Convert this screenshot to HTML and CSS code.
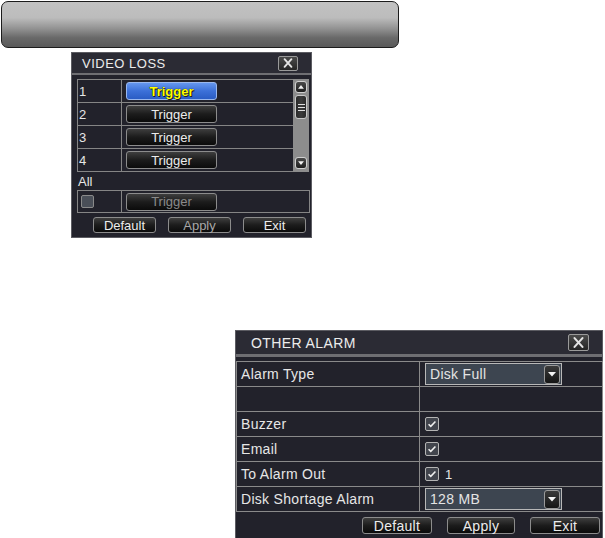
FILE: index.html
```html
<!DOCTYPE html>
<html>
<head>
<meta charset="utf-8">
<link rel="stylesheet" href="styles.css">
</head>
<body>
<div class="titlebar"></div>

<div class="panel vl">
  <div class="phead">
    <span class="ptitle">VIDEO LOSS</span>
    <span class="close"><svg viewBox="0 0 20 14" width="18" height="12"><path d="M6 2.5L14 11.5M14 2.5L6 11.5" stroke="#e4e4e4" stroke-width="2.2" stroke-linecap="round"/></svg></span>
  </div>
  <div class="vbody">
    <div class="list">
      <div class="rows">
        <div class="row"><span class="num">1</span><span class="cell"><span class="btn trig active">Trigger</span></span></div>
        <div class="row"><span class="num">2</span><span class="cell"><span class="btn trig">Trigger</span></span></div>
        <div class="row"><span class="num">3</span><span class="cell"><span class="btn trig">Trigger</span></span></div>
        <div class="row"><span class="num">4</span><span class="cell"><span class="btn trig">Trigger</span></span></div>
      </div>
      <div class="scroll">
        <span class="sbtn"><svg viewBox="0 0 12 12" width="12" height="12"><path d="M2.5 8h7L6 3.5z" fill="#f2f2f2"/></svg></span>
        <span class="thumb"><i></i><i></i><i></i></span>
        <span class="sspace"></span>
        <span class="sbtn"><svg viewBox="0 0 12 12" width="12" height="12"><path d="M2.5 4h7L6 8.5z" fill="#f2f2f2"/></svg></span>
      </div>
    </div>
    <div class="alllabel">All</div>
    <div class="allrow"><span class="num"><span class="cbox off"></span></span><span class="cell"><span class="btn trig dis">Trigger</span></span></div>
    <div class="btnrow vlbtns">
      <span class="btn bb">Default</span>
      <span class="btn bb dimtxt">Apply</span>
      <span class="btn bb">Exit</span>
    </div>
  </div>
</div>

<div class="panel oa">
  <div class="phead oahead">
    <span class="ptitle oatitle">OTHER ALARM</span>
    <span class="close oaclose"><svg viewBox="0 0 21 17" width="19" height="15"><path d="M6 3.5L15 13.5M15 3.5L6 13.5" stroke="#e4e4e4" stroke-width="2.4" stroke-linecap="round"/></svg></span>
  </div>
  <div class="obody">
    <div class="otable">
      <div class="orow"><span class="olab">Alarm Type</span><span class="oval"><span class="dd"><span class="ddtxt">Disk Full</span><span class="ddarr"><svg viewBox="0 0 12 12" width="12" height="12"><path d="M2 4h8L6 8.5z" fill="#f5f5f5"/></svg></span></span></span></div>
      <div class="orow"><span class="olab"></span><span class="oval"></span></div>
      <div class="orow"><span class="olab">Buzzer</span><span class="oval"><span class="cbox"><svg viewBox="0 0 14 14" width="12" height="12"><path d="M3 7.2l2.6 2.6L11 4" stroke="#f0f0f0" stroke-width="1.8" fill="none"/></svg></span></span></div>
      <div class="orow"><span class="olab">Email</span><span class="oval"><span class="cbox"><svg viewBox="0 0 14 14" width="12" height="12"><path d="M3 7.2l2.6 2.6L11 4" stroke="#f0f0f0" stroke-width="1.8" fill="none"/></svg></span></span></div>
      <div class="orow"><span class="olab">To Alarm Out</span><span class="oval"><span class="cbox"><svg viewBox="0 0 14 14" width="12" height="12"><path d="M3 7.2l2.6 2.6L11 4" stroke="#f0f0f0" stroke-width="1.8" fill="none"/></svg></span><span class="one">1</span></span></div>
      <div class="orow"><span class="olab">Disk Shortage Alarm</span><span class="oval"><span class="dd"><span class="ddtxt">128 MB</span><span class="ddarr"><svg viewBox="0 0 12 12" width="12" height="12"><path d="M2 4h8L6 8.5z" fill="#f5f5f5"/></svg></span></span></span></div>
    </div>
    <div class="btnrow oabtns">
      <span class="btn ob w70">Default</span>
      <span class="btn ob w68">Apply</span>
      <span class="btn ob w70">Exit</span>
    </div>
  </div>
</div>
</body>
</html>
```

FILE: styles.css
```css
* { box-sizing: border-box; }
html, body { margin: 0; padding: 0; background: #ffffff; }
body { font-family: "Liberation Sans", Arial, sans-serif; color: #e6e6e6; width: 605px; height: 538px; overflow: hidden; }

.titlebar {
  margin: 1px 0 0 1px;
  width: 398px;
  height: 47px;
  border: 1.5px solid #1c1c1c;
  border-radius: 7px;
  background: linear-gradient(#c2c2c2 0%, #bcbcbc 35%, #949494 58%, #686868 80%, #5a5a5a 100%);
}

.panel {
  background: #22222b;
  border: 1px solid #5c5c62;
}
.phead {
  display: flex;
  align-items: center;
  justify-content: space-between;
  background: #2b2b34;
  border-bottom: 2px solid #6e6e72;
}
.ptitle { font-size: 13px; letter-spacing: 0.5px; color: #ececec; }
.close {
  display: flex; align-items: center; justify-content: center;
  border: 1px solid #9a9a9a;
  border-radius: 2px;
  background: linear-gradient(#4a4a4a, #252525);
}

/* VIDEO LOSS */
.vl { margin: 4px 0 0 71px; width: 241px; height: 186px; }
.vl .phead { height: 22px; padding: 0 13px 0 10px; }
.vl .close { width: 20px; height: 15px; }
.vbody { padding: 4px 2px 0 5px; }
.list { display: flex; height: 93px; }
.rows { width: 217px; border-top: 1px solid #858585; border-left: 1px solid #858585; }
.row { display: flex; height: 23px; border-bottom: 1px solid #858585; }
.num { width: 44px; border-right: 1px solid #858585; font-size: 13px; display: flex; align-items: center; padding-left: 1px; }
.cell { display: flex; align-items: center; padding-left: 4px; }
.btn {
  display: inline-flex; align-items: center; justify-content: center;
  background: linear-gradient(#3e3e3e 0%, #1c1c1c 50%, #0b0b0b 100%);
  border: 1px solid #8c8c8c;
  border-radius: 3px;
  color: #ececec;
}
.trig { width: 91px; height: 18px; font-size: 13px; }
.trig.active {
  background: linear-gradient(#6496ee 0%, #3c70d8 50%, #2a5cc4 100%);
  border-color: #9ab8ee;
  color: #ffff00;
  font-weight: bold;
  text-shadow: 0 0 1px #000, 1px 1px 0 #222;
}
.trig.dis { color: #8a8a8a; }
.scroll {
  width: 16px; background: #8d8d8d;
  display: flex; flex-direction: column; align-items: center;
  padding: 2px 0 3px 0;
}
.sbtn {
  width: 12px; height: 12px; border-radius: 3px;
  background: linear-gradient(#4a4a4a, #1e1e1e);
  border: 1px solid #d0d0d0;
  display: flex; align-items: center; justify-content: center;
}
.sbtn svg { display: block; }
.thumb {
  margin-top: 2px;
  width: 12px; height: 24px; border-radius: 3px;
  background: linear-gradient(90deg, #2a2a2a, #3c3c3c, #2a2a2a);
  border: 1px solid #c8c8c8;
  display: flex; flex-direction: column; align-items: center; justify-content: center; gap: 2px;
}
.thumb i { display: block; width: 7px; height: 1px; background: #e0e0e0; }
.sspace { flex: 1; }
.alllabel { height: 18px; font-size: 13px; display: flex; align-items: center; padding-left: 1px; }
.allrow { display: flex; width: 233px; height: 23px; border: 1px solid #858585; }
.allrow .num { padding-left: 3px; }
.cbox {
  width: 14px; height: 14px;
  border: 1px solid #b4b4b4; border-radius: 2px;
  background: #42454d;
  display: inline-flex; align-items: center; justify-content: center;
}
.cbox.off { width: 13px; height: 13px; background: #4a4f58; border-color: #8a8a8a; }
.btnrow { display: flex; }
.vlbtns { margin-top: 4px; padding-left: 16px; gap: 12px; }
.bb { width: 63px; height: 16px; font-size: 13px; }
.dimtxt { color: #a8a8a8; }

/* OTHER ALARM */
.oa { margin: 92px 0 0 235px; width: 368px; height: 214px; }
.oahead { height: 26px; padding: 0 13px 0 15px; border-bottom-width: 3px; }
.oatitle { font-size: 14px; letter-spacing: 0.4px; }
.oaclose { width: 21px; height: 17px; }
.obody { padding: 4px 0 0 0; }
.otable { width: 367px; border-top: 1px solid #8a8a8a; border-left: 1px solid #8a8a8a; border-right: 1px solid #8a8a8a; }
.orow { display: flex; height: 25px; border-bottom: 1px solid #8a8a8a; font-size: 14px; letter-spacing: 0.3px; }
.olab { width: 183px; border-right: 1px solid #8a8a8a; display: flex; align-items: center; padding-left: 4px; }
.oval { flex: 1; display: flex; align-items: center; padding-left: 5px; }
.dd {
  width: 137px; height: 22px;
  background: #3d4550;
  border: 1px solid #b8b8b8;
  display: flex; align-items: center; justify-content: space-between;
  padding: 0 1px 0 4px;
}
.ddtxt { font-size: 14px; color: #e4e4e4; }
.ddarr {
  width: 16px; height: 19px; border-radius: 3px;
  background: linear-gradient(#3a3a3a, #151515);
  border: 1px solid #9a9a9a;
  display: flex; align-items: center; justify-content: center;
}
.one { margin-left: 6px; font-size: 13px; }
.oabtns { margin-top: 5px; justify-content: flex-end; gap: 15px; padding-right: 2px; }
.ob { height: 17px; font-size: 14px; letter-spacing: 0.3px; }
.w70 { width: 70px; }
.w68 { width: 68px; }
```
